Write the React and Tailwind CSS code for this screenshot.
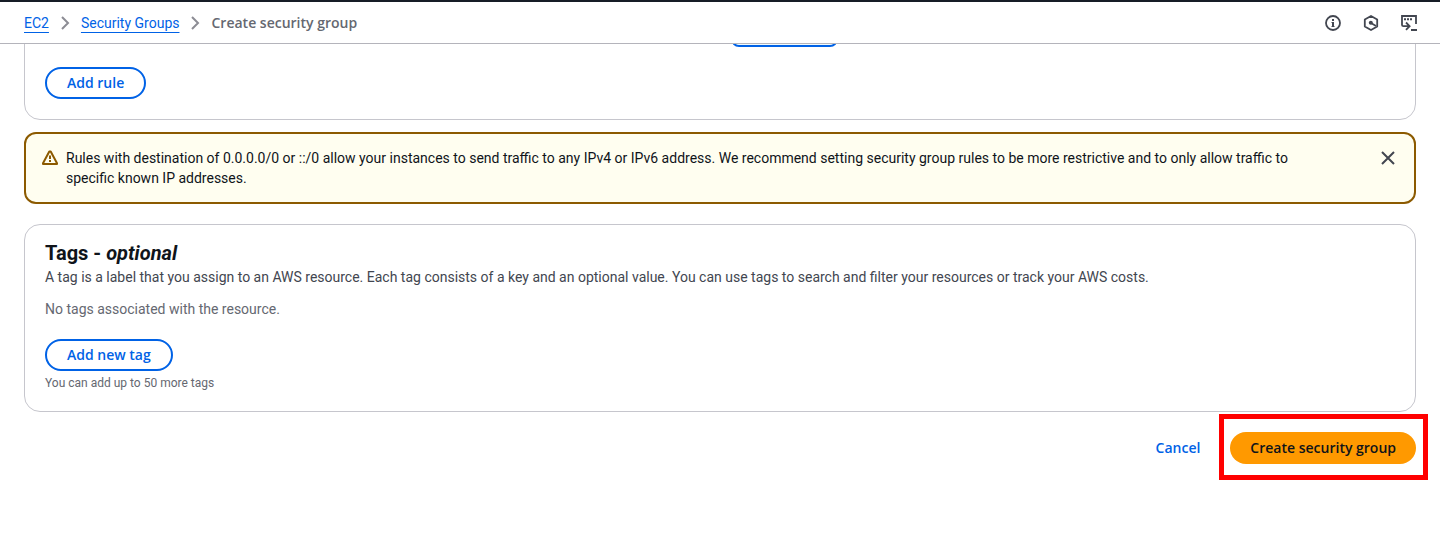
import { useState } from "react";

const strongText = "font-['Open_Sans',sans-serif] text-sm font-semibold";
const outlineButton = `${strongText} flex h-8 items-center rounded-full border-2 border-[#0062e6] bg-white px-5 text-[#0062e6]`;
const crumbLink =
  "text-[#0062e6] underline decoration-1 underline-offset-4 [text-decoration-skip-ink:none]";

function Chevron() {
  return (
    <svg viewBox="0 0 16 16" className="size-4" fill="none" stroke="#8c8c94" strokeWidth="2" aria-hidden="true">
      <path d="M5 2l6 6-6 6" />
    </svg>
  );
}

function Header() {
  return (
    <header className="flex h-11 items-center justify-between border-t-2 border-b border-t-[#161d26] border-b-[#b4b4bb] bg-white pr-[23px] pl-6">
      <nav aria-label="Breadcrumbs">
        <ol className="flex items-center gap-2 text-sm leading-5">
          <li className="flex items-center gap-2">
            <a href="#ec2" className={crumbLink}>EC2</a>
            <Chevron />
          </li>
          <li className="flex items-center gap-2">
            <a href="#groups" className={crumbLink}>Security Groups</a>
            <Chevron />
          </li>
          <li aria-current="page" className={`${strongText} text-[#656871]`}>Create security group</li>
        </ol>
      </nav>
      <div className="flex items-center gap-[22px] text-[#424650]">
        <button type="button" aria-label="Info">
          <svg viewBox="0 0 16 16" className="size-4" fill="none" stroke="currentColor">
            <circle cx="8" cy="8" r="7" strokeWidth="1.800" />
            <path d="M8 4v2M8 7v5" strokeWidth="2" />
            <path d="M6.500 7.500H8M6.500 11.500h3" strokeWidth="1" />
          </svg>
        </button>
        <button type="button" aria-label="Diagnostics">
          <svg viewBox="0 0 16 16" className="size-4" fill="none" stroke="currentColor" strokeWidth="1.800" strokeLinejoin="round">
            <path d="M8 1l6.200 3.500v7L8 15l-6.200-3.500v-7z" />
            <path d="M8 8l5 3" />
            <circle cx="7.800" cy="7.800" r="2" fill="currentColor" stroke="none" />
          </svg>
        </button>
        <button type="button" aria-label="CloudShell">
          <svg viewBox="0 0 16 16" className="size-4" fill="none" stroke="currentColor" strokeWidth="1.800">
            <path d="M1 10V1h14v8" />
            <path d="M3 4.200h2M6 4.200h2M9 4.200h2" strokeWidth="2" />
            <path d="M1 10c0 1 .5 1.200 1.500 1.200H8M5 7.500l3.600 3.700L5 14.800M10 15h6" />
          </svg>
        </button>
      </div>
    </header>
  );
}

export default function App() {
  const [alertOpen, setAlertOpen] = useState(true);
  return (
    <div className="min-h-screen bg-white font-[Roboto,sans-serif] text-sm leading-5 text-[#0f141a]">
      <Header />
      <main className="overflow-hidden px-6 pb-14">
        <section aria-label="Outbound rules" className="-mt-[50px] rounded-2xl border border-[#c6c6cd] p-5">
          <div className="grid grid-cols-[686fr_664fr]">
            <button type="button" aria-label="Remove destination" className="col-start-2 h-8 w-[107px] rounded-lg border-2 border-[#0062e6] bg-[#f0fbff]" />
          </div>
          <button type="button" className={`${outlineButton} mt-5`}>Add rule</button>
        </section>

        {alertOpen && (
          <div role="alert" className="mt-3 flex items-start gap-2 rounded-xl border-2 border-[#8c5a00] bg-[#fffef0] px-4 py-3.5">
            <svg viewBox="0 0 16 16" className="mt-0.5 size-4 shrink-0" fill="none" stroke="#8c5a00" strokeWidth="2" strokeLinejoin="round" aria-hidden="true">
              <path d="M7.300 1.500h1.400L15 13.200V14H1v-.8z" />
              <path d="M8 5.500v3.500M8 10v2" />
            </svg>
            <p className="flex-1">
              Rules with destination of 0.0.0.0/0 or ::/0 allow your instances to send traffic to any IPv4 or IPv6 address. We recommend
              setting security group rules to be more restrictive and to only allow traffic to specific known IP addresses.
            </p>
            <button type="button" aria-label="Dismiss" onClick={() => setAlertOpen(false)} className="mt-0.5 mr-0.5 ml-12 text-[#424650]">
              <svg viewBox="0 0 16 16" className="size-4" fill="none" stroke="currentColor" strokeWidth="2">
                <path d="M2 2l12 12M14 2L2 14" />
              </svg>
            </button>
          </div>
        )}

        <section className="mt-5 rounded-2xl border border-[#c6c6cd] px-5 pt-4 pb-5">
          <h2 className="text-xl leading-6 font-bold">
            Tags - <em>optional</em>
          </h2>
          <p className="mt-0.5 text-[#424650]">
            A tag is a label that you assign to an AWS resource. Each tag consists of a key and an optional value. You can use tags to
            search and filter your resources or track your AWS costs.
          </p>
          <p className="mt-3 text-[#656871]">No tags associated with the resource.</p>
          <button type="button" className={`${outlineButton} mt-5`}>Add new tag</button>
          <p className="mt-1 text-xs leading-4 text-[#656871]">You can add up to 50 more tags</p>
        </section>

        <div className="mt-5 flex items-center justify-end gap-[30px]">
          <button type="button" className={`${strongText} h-8 text-[#0062e6]`}>Cancel</button>
          <div className="relative">
            <button type="submit" className={`${strongText} h-8 rounded-full bg-[#ff9900] px-5`}>Create security group</button>
            <div className="pointer-events-none absolute -top-[18px] -right-3 -bottom-4 -left-[11px] border-[5px] border-[#ff0000]" />
          </div>
        </div>
      </main>
    </div>
  );
}
